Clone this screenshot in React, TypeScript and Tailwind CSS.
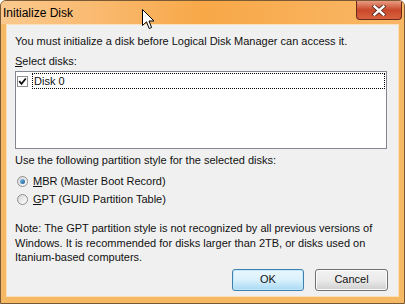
import React from "react";

function CloseIcon() {
  return (
    <svg width="14" height="11" viewBox="0 0 14 11">
      <path
        d="M2.5 1.5 L11.5 9.5 M11.5 1.5 L2.5 9.5"
        stroke="#5a2a1c"
        strokeWidth="4.2"
        strokeLinecap="square"
      />
      <path
        d="M2.5 1.5 L11.5 9.5 M11.5 1.5 L2.5 9.5"
        stroke="#ffffff"
        strokeWidth="2.4"
        strokeLinecap="square"
      />
    </svg>
  );
}

function Cursor() {
  return (
    <svg width="13" height="22" viewBox="0 0 13 22" className="absolute left-[141px] top-[8px]">
      <path
        d="M0.5 0.5 L0.5 16.5 L4.5 12.8 L7.2 19.5 L9.6 18.5 L7 12 L12 12 Z"
        fill="#ffffff"
        stroke="#000000"
        strokeWidth="1"
        strokeLinejoin="miter"
      />
    </svg>
  );
}

function Check() {
  return (
    <div className="w-[11px] h-[11px] border border-[#8e8f8f] bg-white flex items-center justify-center shrink-0">
      <svg width="9" height="9" viewBox="0 0 9 9">
        <path d="M1.2 4.2 L3.5 6.8 L7.8 1.5" stroke="#111111" strokeWidth="1.8" fill="none" />
      </svg>
    </div>
  );
}

function Radio({ checked }: { checked?: boolean }) {
  return (
    <div className="w-[11px] h-[11px] rounded-full border border-[#8e8f8f] bg-gradient-to-br from-[#d6d6d6] to-white flex items-center justify-center shrink-0">
      {checked && (
        <div className="w-[5px] h-[5px] rounded-full bg-gradient-to-br from-[#7ec6ef] to-[#1a5a90]" />
      )}
    </div>
  );
}

export default function App() {
  return (
    <div
      className="relative w-[405px] h-[304px] flex flex-col bg-[#f5b965] border border-[#7a5a34] rounded-t-[6px] overflow-hidden text-[11px] text-[#111111]"
      style={{ fontFamily: '"Liberation Sans", Arial, sans-serif' }}
    >
      <div className="h-[23px] shrink-0 flex items-start justify-between bg-gradient-to-r from-[#fac98e] via-[#f8a847] to-[#f9b766] pl-[2px] pr-[2px]">
        <span className="mt-[5px] text-[12px] leading-[14px] text-black">Initialize Disk</span>
        <div className="w-[46px] h-[19px] rounded-b-[4px] border border-[#6a2818] border-t-0 bg-gradient-to-b from-[#e89a80] via-[#c8482a] to-[#d9623f] flex items-center justify-center">
          <CloseIcon />
        </div>
      </div>
      <div className="flex-1 mx-[5px] mb-[6px] bg-[#f0f0f0] border border-[#fbe0b8] px-[8px] flex flex-col">
        <p className="mt-[10px] leading-[13px]">
          You must initialize a disk before Logical Disk Manager can access it.
        </p>
        <p className="mt-[7px] leading-[13px]">
          <span className="underline">S</span>elect disks:
        </p>
        <div className="mt-[3px] w-[372px] h-[78px] bg-white border border-[#828790] pt-[1px] pl-[1px]">
          <div className="flex items-center gap-[4px]">
            <Check />
            <div className="w-[353px] h-[16px] border border-dotted border-black pl-[1px] leading-[14px]">
              Disk 0
            </div>
          </div>
        </div>
        <p className="mt-[5px] leading-[13px]">
          Use the following partition style for the selected disks:
        </p>
        <div className="mt-[8px] h-[13px] flex items-center gap-[5px] pl-[2px]">
          <Radio checked />
          <span>
            <span className="underline">M</span>BR (Master Boot Record)
          </span>
        </div>
        <div className="mt-[5px] h-[13px] flex items-center gap-[5px] pl-[2px]">
          <Radio />
          <span>
            <span className="underline">G</span>PT (GUID Partition Table)
          </span>
        </div>
        <p className="mt-[15px] leading-[14.5px]">
          Note: The GPT partition style is not recognized by all previous versions of
          <br />
          Windows. It is recommended for disks larger than 2TB, or disks used on
          <br />
          Itanium-based computers.
        </p>
        <div className="mt-[4px] flex justify-end gap-[11px] pr-[2px]">
          <button className="w-[72px] h-[22px] rounded-[3px] border border-[#3c7fb1] bg-gradient-to-b from-[#eaf6fd] via-[#d9f0fc] to-[#a7d9f5] shadow-[inset_0_0_0_1px_#c4eafc]">
            OK
          </button>
          <button className="w-[73px] h-[22px] rounded-[3px] border border-[#707070] bg-gradient-to-b from-[#f2f2f2] via-[#ebebeb] to-[#cfcfcf] shadow-[inset_0_0_0_1px_#fcfcfc]">
            Cancel
          </button>
        </div>
      </div>
      <Cursor />
    </div>
  );
}
